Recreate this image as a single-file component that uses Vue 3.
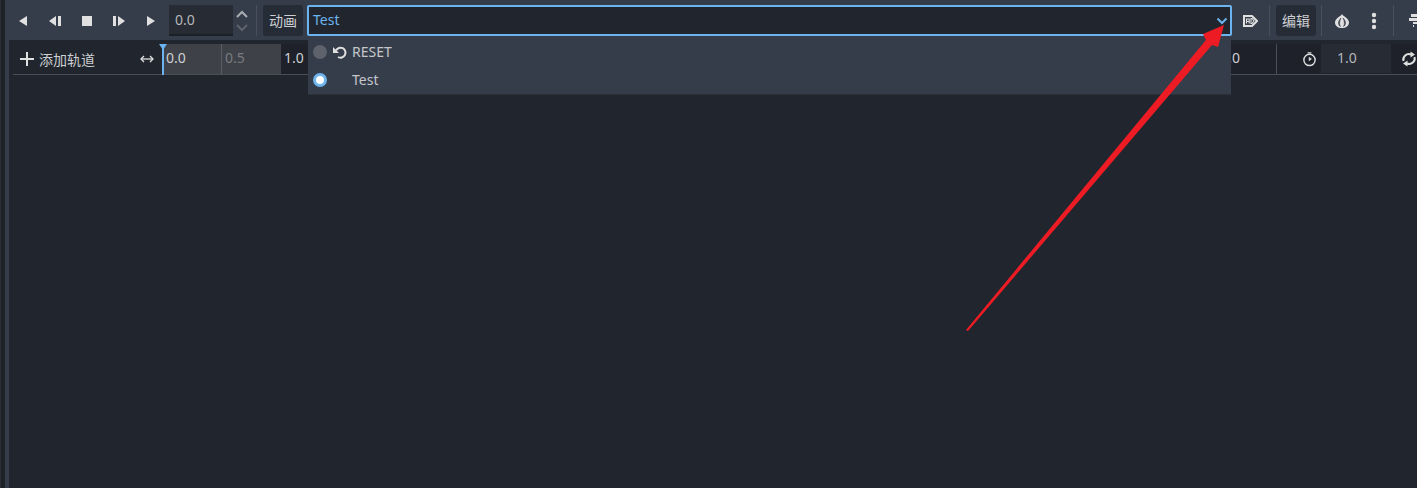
<script setup>
const transport = [
  { name: 'back', shapes: ['M12 3 L4 8 L12 13 Z'] },
  { name: 'back-step', shapes: ['M9 3 L2 8 L9 13 Z', 'M11 3 H14 V13 H11 Z'] },
  { name: 'stop', shapes: ['M3 3 H13 V13 H3 Z'] },
  { name: 'step', shapes: ['M2 3 H5 V13 H2 Z', 'M7 3 L14 8 L7 13 Z'] },
  { name: 'play', shapes: ['M4 3 L12 8 L4 13 Z'] }
]
</script>

<template>
  <div class="page">
    <div class="edge">
      <div class="edge-dark"></div>
      <div class="edge-light"></div>
    </div>

    <div class="main">
      <div class="toolbar">
        <button v-for="b in transport" :key="b.name" class="tool">
          <svg width="16" height="16" viewBox="0 0 16 16">
            <path v-for="d in b.shapes" :key="d" :d="d" fill="#e0e0e0" />
          </svg>
        </button>

        <div class="time-input">0.0</div>
        <div class="spin">
          <svg width="16" height="31" viewBox="0 0 16 31" fill="none" stroke-width="2">
            <path d="M3 12 L8 7 L13 12" stroke="#a9adb3" />
            <path d="M3 20 L8 25 L13 20" stroke="#5d636d" />
          </svg>
        </div>
        <div class="sep first"></div>
        <div class="btn anim-btn">动画</div>

        <div class="select">
          <span>Test</span>
          <svg width="12" height="8" viewBox="0 0 12 8" fill="none">
            <path d="M1.5 1.5 L6 6 L10.5 1.5" stroke="#6cb4ef" stroke-width="2" />
          </svg>
        </div>

        <div class="icon-slot autoplay">
          <svg width="16" height="16" viewBox="0 0 16 16" fill="none" stroke="#e0e0e0">
            <path d="M2 3 H10 L15 8 L10 13 H2 Z" stroke-width="2" />
            <path d="M4.5 10.5 V6 H7.2 V10.5 M4.5 8.5 H7.2 M9 5.5 V10.5 H10 L12 8 L10 5.5 Z" stroke-width="1.1" />
          </svg>
        </div>
        <div class="sep after-auto"></div>
        <div class="btn edit-btn">编辑</div>
        <div class="sep small"></div>
        <div class="icon-slot onion">
          <svg width="16" height="16" viewBox="0 0 16 16">
            <path d="M8 1 C9 3.5 15 5 15 9.5 C15 13 12 15 8 15 C4 15 1 13 1 9.5 C1 5 7 3.5 8 1 Z" fill="#e0e0e0" />
            <path d="M7 5 C5 7 4.5 8.5 4.5 10 C4.5 11.5 5.3 13 6.5 13.5 C5.8 12 5.6 11 5.6 10 C5.6 8.5 6.2 6.8 7 5 Z" fill="#363d4a" stroke="#363d4a" stroke-width="0.5" />
            <path d="M9 5 C11 7 11.5 8.5 11.5 10 C11.5 11.5 10.7 13 9.5 13.5 C10.2 12 10.4 11 10.4 10 C10.4 8.5 9.8 6.8 9 5 Z" fill="#363d4a" stroke="#363d4a" stroke-width="0.5" />
          </svg>
        </div>
        <div class="icon-slot dots">
          <svg width="16" height="20" viewBox="0 0 16 20" fill="#e0e0e0">
            <circle cx="8" cy="4" r="2.2" />
            <circle cx="8" cy="10" r="2.2" />
            <circle cx="8" cy="16" r="2.2" />
          </svg>
        </div>
        <div class="sep last"></div>
        <div class="icon-slot snap">
          <svg width="16" height="16" viewBox="0 0 16 16" fill="#e0e0e0">
            <path d="M3 1 H16 V4 H3 Z M1 5 H16 V8 H1 Z M5 9 H10 V11 H5 Z M5 12 H6 V14 H5 Z" />
          </svg>
        </div>
      </div>

      <div class="timeline">
        <div class="ruler">
          <div class="add-track">
            <svg width="16" height="16" viewBox="0 0 16 16">
              <path d="M7 1 H9 V7 H15 V9 H9 V15 H7 V9 H1 V7 H7 Z" fill="#e0e0e0" />
            </svg>
            <span>添加轨道</span>
          </div>
          <svg class="expand" width="16" height="16" viewBox="0 0 16 16" fill="none" stroke="#e0e0e0">
            <path d="M2 8 H14" stroke-width="1.3" />
            <path d="M5 5 L2 8 L5 11 M11 5 L14 8 L11 11" stroke-width="1.3" />
          </svg>
          <div class="ticks">
            <div class="playhead"></div>
            <div class="cell lit first-cell">0.0</div>
            <div class="cell lit dim">0.5</div>
            <div class="cell">1.0</div>
            <div class="rest"></div>
            <div class="cell end">2.0</div>
            <div class="length">
              <svg width="16" height="16" viewBox="0 0 16 16" fill="none" stroke="#e0e0e0">
                <circle cx="8" cy="9" r="6" stroke-width="1.5" />
                <path d="M6 1.5 H10 M8 6 V9 L10 7.5" stroke-width="1.5" />
              </svg>
              <div class="length-input">1.0</div>
              <svg class="loop" width="16" height="16" viewBox="0 0 16 16" fill="none" stroke="#e0e0e0">
                <path d="M2.5 10 A5.5 5.5 0 0 1 10 3.5" stroke-width="2" />
                <path d="M13.5 6 A5.5 5.5 0 0 1 6 12.5" stroke-width="2" />
                <path d="M9.5 0.5 L14 3.5 L9.5 6.5 Z M6.5 9.5 L2 12.5 L6.5 15.5 Z" fill="#e0e0e0" stroke="none" />
              </svg>
            </div>
          </div>
        </div>
      </div>
    </div>

    <div class="menu">
      <div class="menu-item">
        <span class="radio"></span>
        <svg width="16" height="16" viewBox="0 0 16 16" fill="none" stroke="#e0e0e0">
          <path d="M4 6.5 A5 5 0 1 1 6 13" stroke-width="2" />
          <path d="M1 3 V9 H7 Z" fill="#e0e0e0" stroke="none" />
        </svg>
        <span class="label">RESET</span>
      </div>
      <div class="menu-item">
        <span class="radio on"></span>
        <span class="icon-gap"></span>
        <span class="label">Test</span>
      </div>
    </div>

    <svg class="arrow" width="1417" height="488" viewBox="0 0 1417 488">
      <path d="M966 330 L1206 40 L1203 34 L1224 25 L1218 47 L1212 45 L968 331 Z" fill="#ed1c24" />
    </svg>
  </div>
</template>

<style scoped>
.page {
  position: relative;
  display: flex;
  width: 1417px;
  height: 488px;
  overflow: hidden;
  background: #21262e;
  font-family: "Noto Sans", "Noto Sans CJK SC", sans-serif;
  font-size: 14px;
  color: #cdcfd2;
}

.edge {
  display: flex;
  flex: none;
  width: 9px;
  height: 100%;
}

.edge-dark {
  width: 5px;
  background: #1d2128;
  border-left: 1px solid #2a3038;
}

.edge-light {
  width: 4px;
  background: #363d4a;
}

.main {
  display: flex;
  flex-direction: column;
  flex: 1;
  min-width: 0;
}

.toolbar {
  display: flex;
  align-items: flex-start;
  flex: none;
  height: 40px;
  box-sizing: border-box;
  margin-left: -4px;
  padding-top: 5px;
  padding-left: 2px;
  background: #363d4a;
}

.tool {
  display: flex;
  align-items: center;
  justify-content: center;
  flex: none;
  width: 32px;
  height: 31px;
  padding: 0;
  border: 0;
  background: none;
}

.time-input {
  flex: none;
  width: 64px;
  height: 31px;
  margin-left: 2px;
  padding-left: 6px;
  box-sizing: border-box;
  line-height: 30px;
  background: #262b34;
  border-bottom: 2px solid #1c2027;
  color: #b5b7bb;
}

.spin {
  flex: none;
  width: 17px;
  height: 31px;
  padding-left: 1px;
  box-sizing: border-box;
}

.sep {
  flex: none;
  width: 1px;
  height: 31px;
  margin: 0 6px;
  background: #4a505b;
}

.sep.after-auto {
  margin: 0 6px 0 1px;
}

.sep.small {
  margin: 0 4px 0 5px;
}

.sep.last {
  margin: 0 2px 0 3px;
}

.btn {
  flex: none;
  width: 40px;
  height: 31px;
  line-height: 31px;
  text-align: center;
  border-radius: 3px;
  background: #262c36;
}

.anim-btn {
  margin-right: 4px;
}

.select {
  display: flex;
  align-items: center;
  justify-content: space-between;
  flex: none;
  width: 925px;
  height: 31px;
  padding: 0 2px 0 4px;
  box-sizing: border-box;
  background: #21262e;
  border: 2px solid #6cb4ef;
  border-radius: 2px;
  color: #6cb4ef;
}

.select span {
  margin-bottom: 2px;
}

.icon-slot {
  display: flex;
  align-items: center;
  justify-content: center;
  flex: none;
  height: 31px;
}

.autoplay {
  width: 36px;
}

.onion {
  width: 32px;
}

.dots {
  width: 32px;
}

.snap {
  width: 24px;
  box-sizing: border-box;
  justify-content: flex-start;
  padding-left: 12px;
}

.snap svg {
  flex: none;
}

.timeline {
  flex: 1;
  padding: 4px 0 0 4px;
  background: #21262e;
}

.ruler {
  display: flex;
  align-items: stretch;
  height: 30px;
  border-bottom: 1px solid #4a4e56;
}

.add-track {
  display: flex;
  align-items: center;
  flex: none;
  gap: 4px;
  width: 126px;
  padding-left: 6px;
  box-sizing: border-box;
}

.expand {
  flex: none;
  align-self: center;
  margin-right: 7px;
}

.ticks {
  position: relative;
  display: flex;
  flex: 1;
  min-width: 0;
  background: #1e2129;
}

.playhead {
  position: absolute;
  left: 0;
  top: 0;
  bottom: -1px;
  width: 2px;
  background: #6cb4ef;
}

.playhead::before {
  content: "";
  position: absolute;
  left: -3px;
  top: 0;
  border-left: 4px solid transparent;
  border-right: 4px solid transparent;
  border-top: 6px solid #6cb4ef;
}

.cell {
  flex: none;
  width: 59px;
  padding-left: 3px;
  box-sizing: border-box;
  line-height: 28px;
}

.lit {
  background: #3e4248;
}

.first-cell {
  padding-left: 4px;
}

.dim {
  width: 60px;
  color: #797b80;
  border-left: 1px solid #5a5d63;
}

.rest {
  flex: 1;
}

.end {
  width: 80px;
  padding-left: 0;
  padding-right: 36px;
  text-align: right;
  border-right: 1px solid #4a4e56;
  white-space: nowrap;
}

.length {
  display: flex;
  align-items: center;
  flex: none;
  width: 140px;
  padding-left: 25px;
  box-sizing: border-box;
}

.length-input {
  flex: none;
  align-self: flex-start;
  width: 70px;
  height: 29px;
  margin-left: 4px;
  padding-left: 16px;
  box-sizing: border-box;
  line-height: 28px;
  background: #262b34;
  color: #b5b7bb;
}

.loop {
  flex: none;
  margin-left: 10px;
}

.menu {
  position: absolute;
  left: 308px;
  top: 36px;
  width: 923px;
  height: 59px;
  padding-top: 2px;
  box-sizing: border-box;
  background: #363d4a;
  border-bottom: 1px solid #2a2f38;
}

.menu-item {
  display: flex;
  align-items: center;
  height: 28px;
  padding-left: 5px;
  box-sizing: border-box;
}

.radio {
  flex: none;
  width: 14px;
  height: 14px;
  margin-right: 5px;
  border-radius: 50%;
  background: #5d626c;
  box-sizing: border-box;
}

.radio.on {
  background: #fff;
  border: 3px solid #6cb4ef;
}

.icon-gap {
  flex: none;
  width: 16px;
}

.label {
  margin: 0 0 2px 4px;
  color: #c4c6ca;
}

.arrow {
  position: absolute;
  left: 0;
  top: 0;
  pointer-events: none;
}
</style>
